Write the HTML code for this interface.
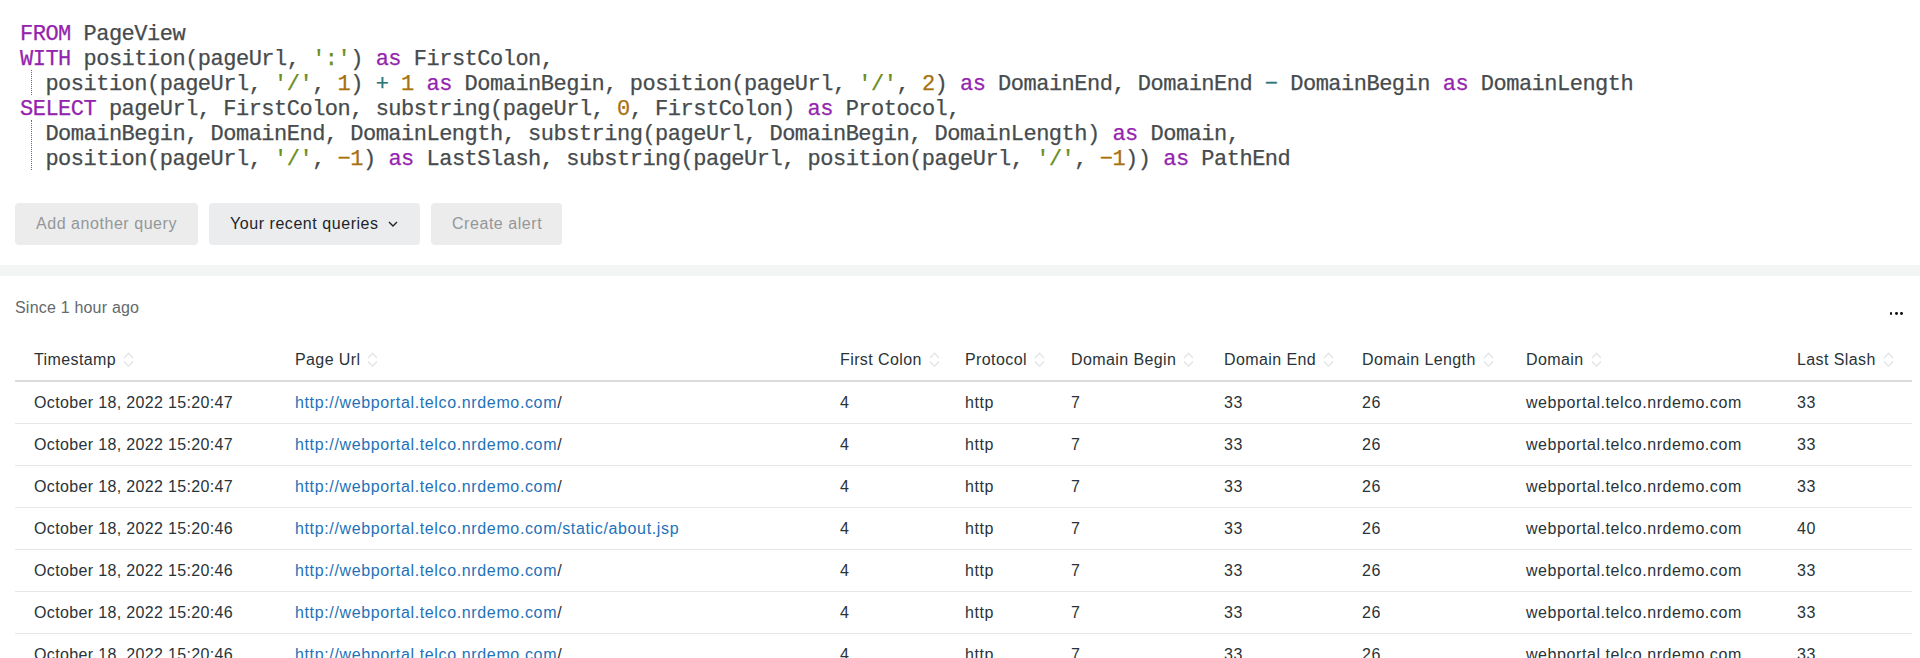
<!DOCTYPE html>
<html><head><meta charset="utf-8">
<style>
html,body{margin:0;padding:0;background:#fff;width:1920px;height:658px;overflow:hidden;position:relative}
body{font-family:"Liberation Sans",sans-serif;color:#293338}
.code{position:absolute;left:20px;top:0;font-family:"Liberation Mono",monospace;font-size:22px;letter-spacing:-0.5px;color:#464b4d;white-space:pre;-webkit-text-stroke:0.25px}
.ln{position:absolute;left:0;height:25px;line-height:25px}
.k{color:#9424ae}.s{color:#6a8d1c}.n{color:#a8710c}.o{color:#2f7575}
.guide{position:absolute;left:31px;width:0;border-left:1px dotted #6a6a6a}
.btn{position:absolute;top:203px;height:41.8px;border-radius:4px;background:#ebeced;font-size:16px;line-height:41px;letter-spacing:0.55px;box-sizing:border-box}
.dis{color:#939799;background:#ececec}
.band{position:absolute;left:0;top:265px;width:1920px;height:11px;background:#f3f4f4}
.since{position:absolute;left:15px;top:299px;font-size:16px;color:#64696c;letter-spacing:0.2px}
.dots{position:absolute;left:1889.6px;top:311.8px}
.dots i{position:absolute;top:0;width:2.8px;height:2.8px;border-radius:50%;background:#111}
table{position:absolute;left:15px;top:337px;width:1897px;table-layout:fixed;border-collapse:collapse;font-size:16px;letter-spacing:0.4px}
td,th{padding:0 0 0 19px;text-align:left;font-weight:normal;white-space:nowrap;position:relative}
th{height:41px;padding-top:2px;border-bottom:2px solid #d9dbdc;color:#293338}
td{height:41px;letter-spacing:0.57px;border-bottom:1px solid #e6e8e8;color:#293338}
.u{color:#1d72b8;letter-spacing:0.64px}
.t{letter-spacing:0.35px}
.sort{display:inline-block;position:relative;vertical-align:-3px;margin-left:7px}
</style></head><body>
<div class="code">
<div class="ln" style="top:22px"><span class="k">FROM</span> PageView</div>
<div class="ln" style="top:47px"><span class="k">WITH</span> position(pageUrl, <span class="s">':'</span>) <span class="k">as</span> FirstColon,</div>
<div class="ln" style="top:72px">  position(pageUrl, <span class="s">'/'</span>, <span class="n">1</span>) <span class="o">+</span> <span class="n">1</span> <span class="k">as</span> DomainBegin, position(pageUrl, <span class="s">'/'</span>, <span class="n">2</span>) <span class="k">as</span> DomainEnd, DomainEnd <span class="o">&#8722;</span> DomainBegin <span class="k">as</span> DomainLength</div>
<div class="ln" style="top:97px"><span class="k">SELECT</span> pageUrl, FirstColon, substring(pageUrl, <span class="n">0</span>, FirstColon) <span class="k">as</span> Protocol,</div>
<div class="ln" style="top:122px">  DomainBegin, DomainEnd, DomainLength, substring(pageUrl, DomainBegin, DomainLength) <span class="k">as</span> Domain,</div>
<div class="ln" style="top:147px">  position(pageUrl, <span class="s">'/'</span>, <span class="n">&#8722;1</span>) <span class="k">as</span> LastSlash, substring(pageUrl, position(pageUrl, <span class="s">'/'</span>, <span class="n">&#8722;1</span>)) <span class="k">as</span> PathEnd</div>
</div>
<div class="guide" style="top:70px;height:25px"></div>
<div class="guide" style="top:120px;height:50px"></div>

<div class="btn dis" style="left:15px;width:183px;padding-left:21px">Add another query</div>
<div class="btn" style="left:209px;width:211px;padding-left:21px;color:#1d252c">Your recent queries <svg width="12" height="8" viewBox="0 0 12 8" style="margin-left:3.7px;vertical-align:1.5px"><path d="M2 2 L6 6 L10 2" fill="none" stroke="#1d252c" stroke-width="1.4"/></svg></div>
<div class="btn dis" style="left:431px;width:131px;padding-left:21px">Create alert</div>

<div class="band"></div>
<div class="since">Since 1 hour ago</div>
<div class="dots"><i style="left:0"></i><i style="left:5.3px"></i><i style="left:10.6px"></i></div>

<table>
<colgroup><col style="width:261px"><col style="width:545px"><col style="width:125px"><col style="width:106px"><col style="width:153px"><col style="width:138px"><col style="width:164px"><col style="width:271px"><col style="width:134px"></colgroup>
<thead><tr>
<th>Timestamp<svg class="sort" width="11" height="16" viewBox="0 0 11 16"><path d="M1 6 L5.5 1.2 L10 6 M1 9.5 L5.5 14.3 L10 9.5" fill="none" stroke="#e3e5e6" stroke-width="1.4"/></svg></th>
<th>Page Url<svg class="sort" width="11" height="16" viewBox="0 0 11 16"><path d="M1 6 L5.5 1.2 L10 6 M1 9.5 L5.5 14.3 L10 9.5" fill="none" stroke="#e3e5e6" stroke-width="1.4"/></svg></th>
<th>First Colon<svg class="sort" width="11" height="16" viewBox="0 0 11 16"><path d="M1 6 L5.5 1.2 L10 6 M1 9.5 L5.5 14.3 L10 9.5" fill="none" stroke="#e3e5e6" stroke-width="1.4"/></svg></th>
<th>Protocol<svg class="sort" width="11" height="16" viewBox="0 0 11 16"><path d="M1 6 L5.5 1.2 L10 6 M1 9.5 L5.5 14.3 L10 9.5" fill="none" stroke="#e3e5e6" stroke-width="1.4"/></svg></th>
<th>Domain Begin<svg class="sort" width="11" height="16" viewBox="0 0 11 16"><path d="M1 6 L5.5 1.2 L10 6 M1 9.5 L5.5 14.3 L10 9.5" fill="none" stroke="#e3e5e6" stroke-width="1.4"/></svg></th>
<th>Domain End<svg class="sort" width="11" height="16" viewBox="0 0 11 16"><path d="M1 6 L5.5 1.2 L10 6 M1 9.5 L5.5 14.3 L10 9.5" fill="none" stroke="#e3e5e6" stroke-width="1.4"/></svg></th>
<th>Domain Length<svg class="sort" width="11" height="16" viewBox="0 0 11 16"><path d="M1 6 L5.5 1.2 L10 6 M1 9.5 L5.5 14.3 L10 9.5" fill="none" stroke="#e3e5e6" stroke-width="1.4"/></svg></th>
<th>Domain<svg class="sort" width="11" height="16" viewBox="0 0 11 16"><path d="M1 6 L5.5 1.2 L10 6 M1 9.5 L5.5 14.3 L10 9.5" fill="none" stroke="#e3e5e6" stroke-width="1.4"/></svg></th>
<th>Last Slash<svg class="sort" width="11" height="16" viewBox="0 0 11 16"><path d="M1 6 L5.5 1.2 L10 6 M1 9.5 L5.5 14.3 L10 9.5" fill="none" stroke="#e3e5e6" stroke-width="1.4"/></svg></th>
</tr></thead>
<tbody>
<tr><td class="t">October 18, 2022 15:20:47</td><td><span class="u">http://webportal.telco.nrdemo.com</span>/</td><td>4</td><td>http</td><td>7</td><td>33</td><td>26</td><td>webportal.telco.nrdemo.com</td><td>33</td></tr>
<tr><td class="t">October 18, 2022 15:20:47</td><td><span class="u">http://webportal.telco.nrdemo.com</span>/</td><td>4</td><td>http</td><td>7</td><td>33</td><td>26</td><td>webportal.telco.nrdemo.com</td><td>33</td></tr>
<tr><td class="t">October 18, 2022 15:20:47</td><td><span class="u">http://webportal.telco.nrdemo.com</span>/</td><td>4</td><td>http</td><td>7</td><td>33</td><td>26</td><td>webportal.telco.nrdemo.com</td><td>33</td></tr>
<tr><td class="t">October 18, 2022 15:20:46</td><td><span class="u">http://webportal.telco.nrdemo.com/static/about.jsp</span></td><td>4</td><td>http</td><td>7</td><td>33</td><td>26</td><td>webportal.telco.nrdemo.com</td><td>40</td></tr>
<tr><td class="t">October 18, 2022 15:20:46</td><td><span class="u">http://webportal.telco.nrdemo.com</span>/</td><td>4</td><td>http</td><td>7</td><td>33</td><td>26</td><td>webportal.telco.nrdemo.com</td><td>33</td></tr>
<tr><td class="t">October 18, 2022 15:20:46</td><td><span class="u">http://webportal.telco.nrdemo.com</span>/</td><td>4</td><td>http</td><td>7</td><td>33</td><td>26</td><td>webportal.telco.nrdemo.com</td><td>33</td></tr>
<tr><td class="t">October 18, 2022 15:20:46</td><td><span class="u">http://webportal.telco.nrdemo.com</span>/</td><td>4</td><td>http</td><td>7</td><td>33</td><td>26</td><td>webportal.telco.nrdemo.com</td><td>33</td></tr>
</tbody>
</table>
</body></html>
